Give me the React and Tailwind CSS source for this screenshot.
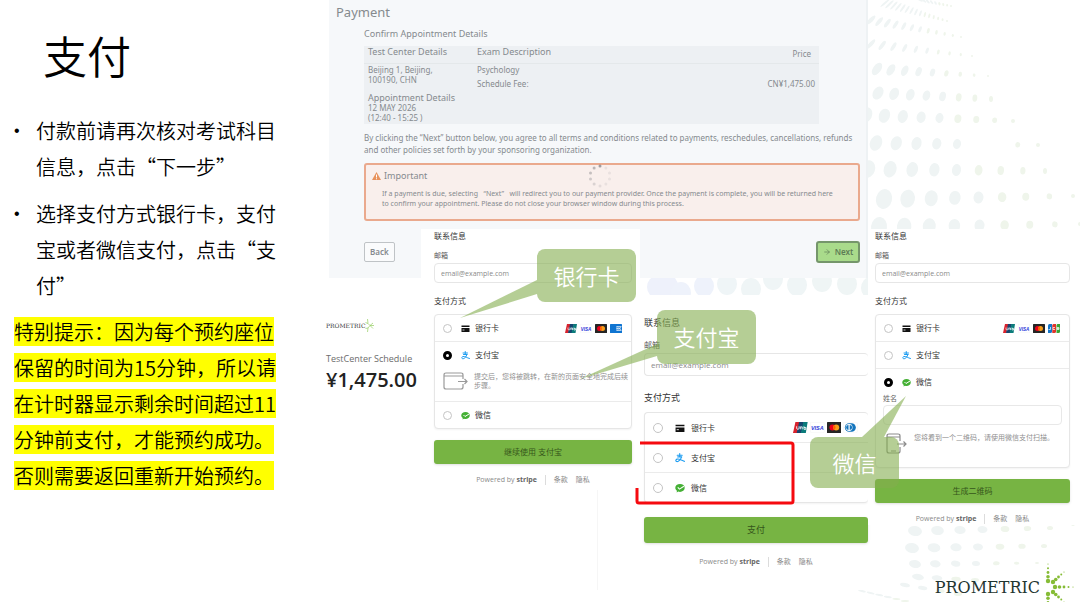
import { ArrowRight } from "lucide-react";
import { clsx } from "clsx";

// Background halftone: one entry per row, dots are spread evenly from start to end.
const DOT_ROWS = [
  { from: [920, 0], to: [951, 6], count: 9, r: [1, 3], rEnd: [1, 1], tilt: -60 },
  { from: [885, 3], to: [947, 21], count: 15, r: [1, 6], rEnd: [1, 1], tilt: 50 },
  { from: [871, 20], to: [961, 37], count: 12, r: [2, 6], rEnd: [1, 1], tilt: 45 },
  { from: [871, 44], to: [972, 56], count: 10, r: [2, 6], rEnd: [1, 1], tilt: 42 },
  { from: [877, 69], to: [988, 76], count: 9, r: [4, 7], rEnd: [1, 1], tilt: 36 },
  { from: [878, 93], to: [991, 99], count: 8, r: [5, 7], rEnd: [2, 3], tilt: 30 },
  { from: [866, 115], to: [1013, 121], count: 9, r: [6, 8], rEnd: [2, 2], tilt: 24 },
  { from: [876, 143], to: [1038, 145], count: 9, r: [6, 8], rEnd: [2, 2], tilt: 22, skip: [5, 6] },
  { from: [868, 169], to: [1045, 171], count: 9, r: [7, 9], rEnd: [2, 3], tilt: 18 },
  { from: [884, 199], to: [1073, 196], count: 9, r: [8, 10], rEnd: [2, 2], tilt: 14 },
  { from: [879, 227], to: [1080, 224], count: 9, r: [8, 10], rEnd: [2, 2], tilt: 8 },
  { from: [915, 531], to: [1050, 528], count: 7, r: [7, 5], rEnd: [3, 2], tilt: 8 },
  { from: [912, 548], to: [1044, 546], count: 7, r: [7, 5], rEnd: [3, 2], tilt: 8 },
  { from: [915, 564], to: [1037, 563], count: 7, r: [6, 4], rEnd: [2, 1], tilt: 10 },
  { from: [918, 577], to: [975, 580], count: 4, r: [6, 3], rEnd: [4, 2], tilt: 10 },
  { from: [905, 585], to: [958, 594], count: 4, r: [5, 2], rEnd: [4, 2], tilt: 12 },
  { from: [862, 591], to: [905, 601], count: 6, r: [4, 1], rEnd: [4, 1], tilt: 16 },
];

const STRIP_DOTS = [
  [657, 287, "#eef1fb"],
  [668, 286, "#eef1fb"],
  [681, 293, "#eef2fb"],
  [704, 286, "#eef2fb"],
  [727, 284, "#eff5f7"],
  [751, 289, "#eff5f6"],
  [773, 279, "#eff5f6"],
  [797, 285, "#eff5f6"],
  [822, 281, "#eff5f5"],
  [847, 284, "#eff5f5"],
  [871, 288, "#eff5f5"],
];

const lerp = (a, b, t) => a + (b - a) * t;

function Backdrop() {
  return (
    <svg className="absolute left-0 top-0" width="1080" height="602" aria-hidden="true">
      {DOT_ROWS.map((row, i) =>
        Array.from({ length: row.count }, (_, n) => {
          if (row.skip?.includes(n)) return null;
          const t = n / (row.count - 1);
          const x = lerp(row.from[0], row.to[0], t);
          const y = lerp(row.from[1], row.to[1], t);
          return (
            <ellipse
              key={`${i}-${n}`}
              cx={x}
              cy={y}
              rx={lerp(row.r[0], row.rEnd[0], t)}
              ry={lerp(row.r[1], row.rEnd[1], t)}
              transform={`rotate(${lerp(row.tilt, 0, t)} ${x} ${y})`}
              fill={t > 0.6 ? "#eff5eb" : "#eff4f4"}
            />
          );
        })
      )}
      {STRIP_DOTS.map(([x, y, fill]) => (
        <ellipse key={x} cx={x} cy={y} rx="10" ry="11" fill={fill} />
      ))}
      <ellipse cx="1079" cy="504" rx="3" ry="2" fill="#eef5ea" />
      <ellipse cx="1073" cy="524" rx="2" ry="2" fill="#eef5ea" />
    </svg>
  );
}

/* ---------- small drawings ---------- */

function UnionPay() {
  return (
    <svg viewBox="0 0 24 18" className="h-full w-auto">
      <path d="M4 0h7L7 18H0z" fill="#d8222d" />
      <path d="M10 0h8l-4 18H6z" fill="#16456f" />
      <path d="M17 0h7l-3 18h-8z" fill="#0b7c7b" />
      <path d="M6 7v3q0 2 2 2t2-2V7M12 12V8h3v4M18 7v5M18 9h3v3h-3" fill="none" stroke="#fff" strokeWidth="1.4" />
    </svg>
  );
}

function Visa() {
  return (
    <svg viewBox="0 0 24 18" className="h-full w-auto">
      <rect x="0.5" y="0.5" width="23" height="17" rx="2" fill="#fff" stroke="#f3f3f3" />
      <text x="12" y="13" textAnchor="middle" fontFamily="Liberation Sans, sans-serif" fontSize="9" fontWeight="700" fontStyle="italic" fill="#2a35d8">
        VISA
      </text>
    </svg>
  );
}

function Mastercard() {
  return (
    <svg viewBox="0 0 24 18" className="h-full w-auto">
      <rect width="24" height="18" rx="1" fill="#252525" />
      <circle cx="9" cy="9" r="5" fill="#eb001b" />
      <circle cx="15" cy="9" r="5" fill="#f79e1b" />
      <path d="M12 5a5 5 0 0 1 0 8a5 5 0 0 1 0-8" fill="#ff5f00" />
    </svg>
  );
}

function Amex() {
  return (
    <svg viewBox="0 0 24 18" className="h-full w-auto">
      <rect width="24" height="18" rx="1" fill="#0f74d1" />
      <path d="M13 5h10M13 9h6M13 13h10M14 5v8M17 6l5 6M22 6l-5 6" fill="none" stroke="#fff" strokeWidth="1.3" />
    </svg>
  );
}

function Diners() {
  return (
    <svg viewBox="0 0 24 18" className="h-full w-auto">
      <rect x="0.5" y="0.5" width="23" height="17" rx="2" fill="#fff" stroke="#f3f3f3" />
      <path d="M10 2h4a7 7 0 0 1 0 14h-4a7 7 0 0 1 0-14" fill="#1475bd" />
      <circle cx="10" cy="9" r="5.6" fill="#fff" />
      <path d="M9 5a4 4 0 0 0 0 8zM11 5a4 4 0 0 1 0 8z" fill="#1475bd" />
    </svg>
  );
}

function Jcb() {
  return (
    <svg viewBox="0 0 24 18" className="h-full w-auto">
      <path d="M3 0h5v15q0 3-3 3H0V3q0-3 3-3" fill="#1577c9" />
      <path d="M11 0h5v15q0 3-3 3H8.500V3q0-3 2.500-3" fill="#e0342b" />
      <path d="M19 0h5v15q0 3-3 3h-4V3q0-3 2-3" fill="#3aa435" />
      <path d="M1 11h4V6M14 7h-4v4h4M18 7h4v4h-4zM18 9h4" fill="none" stroke="#fff" strokeWidth="1.4" />
    </svg>
  );
}

const BRANDS = { unionpay: UnionPay, visa: Visa, mastercard: Mastercard, amex: Amex, diners: Diners, jcb: Jcb };

function CardGlyph({ className }) {
  return (
    <svg viewBox="0 0 18 18" className={className}>
      <path d="M1 3h16v3H1zM1 8h16v8H1z" fill="#111" />
      <path d="M3 12h4" stroke="#fff" strokeWidth="1.5" />
    </svg>
  );
}

function AlipayGlyph({ className }) {
  return (
    <svg viewBox="0 0 18 18" className={className} fill="none" stroke="#1e9df1" strokeWidth="2" strokeLinecap="round">
      <path d="M4 4h9M8.500 1v6M5 7h7M12 7q-2 6-6 8c-5 2-6-3-2-4c4-1 8 3 13 4" />
    </svg>
  );
}

function WechatGlyph({ className }) {
  return (
    <svg viewBox="0 0 18 18" className={className}>
      <path d="M9 2c5 0 8.500 3 8.500 7s-4 7-8.500 7c-1 0-2 0-3-.5L3 17l.5-3C2 13 .5 11 .5 9C.5 5 4 2 9 2" fill="#45b035" />
      <path d="M5 8l3 3l8-5" fill="none" stroke="#fff" strokeWidth="2" />
    </svg>
  );
}

function RedirectDrawing() {
  return (
    <svg viewBox="0 0 26 18" className="h-[18px] w-[26px] shrink-0" fill="none" stroke="#9a9a9a" strokeWidth="1.200">
      <path d="M20 7V3q0-2-2-2H3Q1 1 1 3v12q0 2 2 2h15q2 0 2-2v-3M1 4h19M15 9.500h9M21.500 7l2.500 2.500l-2.500 2.500" />
    </svg>
  );
}

function PhoneDrawing() {
  return (
    <svg viewBox="0 0 22 22" className="h-[22px] w-[22px] shrink-0" fill="none" stroke="#8b8b8b" strokeWidth="1.200">
      <path d="M14 8V3q0-2-2-2H3Q1 1 1 3v15q0 2 2 2h9q2 0 2-2v-4M1 4h13M5 18h5M11 11h9M17.500 8.500L20 11l-2.500 2.500" />
    </svg>
  );
}

/* ---------- checkout ---------- */

const METHODS = [
  { id: "card", label: "银行卡", Glyph: CardGlyph },
  { id: "alipay", label: "支付宝", Glyph: AlipayGlyph },
  { id: "wechat", label: "微信", Glyph: WechatGlyph },
];

function Method({ form, method, large, checked, brands, children }) {
  const { Glyph } = method;
  const id = `${form}-${method.id}`;
  return (
    <li>
      <div className={clsx("flex items-center pl-2", large ? "h-[29px] pr-[10px]" : "h-[26px] pr-[9px]")}>
        <input
          type="radio"
          id={id}
          name={`${form}-method`}
          defaultChecked={checked}
          className={clsx(
            "shrink-0 appearance-none rounded-full border border-[#c4c4c4] bg-white checked:border-[3px] checked:border-black",
            large ? "size-[10px]" : "size-[9px]"
          )}
        />
        <label htmlFor={id} className={clsx("flex items-center text-[8px] text-[#333]", large ? "ml-3 gap-[6px]" : "ml-[9px] gap-[5px]")}>
          <Glyph className={large ? "size-[10px]" : "size-[9px]"} />
          {method.label}
        </label>
        {brands && (
          <span className={clsx("ml-auto flex", large ? "h-[11px] gap-[2px]" : "h-[9px] gap-[3px]")}>
            {brands.map((name) => {
              const Brand = BRANDS[name];
              return <Brand key={name} />;
            })}
          </span>
        )}
      </div>
      {children}
    </li>
  );
}

function Checkout({ form, large, selected, brands, details, submit }) {
  const heading = clsx("leading-3 text-[#333]", large ? "text-[9px]" : "text-[8px]");
  return (
    <form onSubmit={(e) => e.preventDefault()}>
      <h3 className={heading}>联系信息</h3>
      <label
        htmlFor={`${form}-email`}
        className={clsx("block leading-[10px] text-[#555]", large ? "mt-[11px] text-[8px]" : "mt-[9px] text-[7px]")}
      >
        邮箱
      </label>
      <input
        type="email"
        id={`${form}-email`}
        placeholder="email@example.com"
        className={clsx(
          "block w-full rounded border border-[#e6e6e6] bg-white px-[6px] placeholder-[#8a8a8a]",
          large ? "mt-[3px] h-[23px] border-r-0 text-[8px]" : "mt-[2px] h-5 text-[7px]"
        )}
      />
      <h3 className={clsx(heading, large ? "mt-4" : "mt-3")}>支付方式</h3>
      <ul
        className={clsx(
          "divide-y divide-[#ebebeb] rounded border border-[#e6e6e6] bg-white shadow-xs",
          large ? "mt-2 border-r-0" : "mt-[7px]"
        )}
      >
        {METHODS.map((m) => (
          <Method
            key={m.id}
            form={form}
            method={m}
            large={large}
            checked={selected === m.id}
            brands={m.id === "card" ? brands : null}
          >
            {selected === m.id && details}
          </Method>
        ))}
      </ul>
      <button
        type="submit"
        className={clsx(
          "block w-full rounded-[3px] bg-[#77b443] text-[#36561b] shadow-sm",
          large ? "mt-[14px] h-[26px] text-[9px]" : "mt-[11px] h-6 text-[8px]"
        )}
      >
        {submit}
      </button>
      <p
        className={clsx(
          "flex items-center justify-center text-[7px] leading-3 text-[#8a8a8a]",
          large ? "mt-[13px]" : "mt-[10px]"
        )}
      >
        <span>
          Powered by <b className="text-[#666]">stripe</b>
        </span>
        <span className="mx-2 h-[10px] w-px bg-[#dcdcdc]" />
        <a href="#terms">条款</a>
        <a href="#privacy" className="ml-2">隐私</a>
      </p>
    </form>
  );
}

function Callout({ className, tail, children }) {
  return (
    <div className={clsx("absolute flex items-center justify-center rounded-lg bg-[#84ad4e]/60 pb-[2px] text-[22px] font-[350] leading-none text-white", className)}>
      <svg className="absolute left-0 top-0 size-px overflow-visible" aria-hidden="true">
        <path d={tail} fill="#84ad4e" fillOpacity="0.6" />
      </svg>
      {children}
    </div>
  );
}

/* ---------- appointment confirmation ---------- */

function Spinner() {
  return (
    <svg viewBox="0 0 26 26" className="absolute left-[221px] top-[-2px] size-[26px]" aria-hidden="true">
      {[0, 1, 2, 3, 4, 5, 6, 7, 8, 9].map((n) => {
        const a = (n / 10) * Math.PI * 2 - Math.PI / 2;
        return (
          <circle
            key={n}
            cx={13 + Math.cos(a) * 10}
            cy={13 + Math.sin(a) * 10}
            r="1.5"
            fill="#7b7b80"
            opacity={n === 0 ? 0.7 : Math.max(0.12, (n - 3) / 12)}
          />
        );
      })}
    </svg>
  );
}

function Confirmation() {
  return (
    <section className="absolute left-0 top-0 w-[539px] border-r-2 border-[#eef2f4] bg-[#f6f8fa] pb-[15px] pl-[7px] pt-1 font-['Noto_Sans','Noto_Sans_CJK_SC',sans-serif] text-[#858a8e]">
      <h2 className="text-[13px] leading-4">Payment</h2>
      <div className="ml-7 mr-[6px] mt-2 whitespace-nowrap text-[8px] leading-[10px]">
        <h3 className="text-[9px] leading-3">Confirm Appointment Details</h3>
        <table className="mt-[6px] w-[455px] bg-[#edf0f3] text-left">
          <thead>
            <tr className="h-[17px] border-b border-[#e4e8ea] text-[9px] *:font-normal">
              <th className="w-[113px] pb-1 pl-1">Test Center Details</th>
              <th className="pb-1">Exam Description</th>
              <th className="pr-2 text-right text-[8px]">Price</th>
            </tr>
          </thead>
          <tbody>
            <tr className="align-top">
              <td className="pb-px pl-1 pt-px">
                Beijing 1, Beijing,
                <br />
                100190, CHN
                <h4 className="mt-2 text-[9px]">Appointment Details</h4>
                12 MAY 2026
                <br />
                (12:40 - 15:25 )
              </td>
              <td className="pt-px">
                <p>Psychology</p>
                <p className="mt-1">Schedule Fee:</p>
              </td>
              <td className="pr-1 pt-[15px] text-right">CN¥1,475.00</td>
            </tr>
          </tbody>
        </table>
        <p className="mt-2 leading-3">
          By clicking the “Next” button below, you agree to all terms and conditions related to payments, reschedules, cancellations, refunds
          <br />
          and other policies set forth by your sponsoring organization.
        </p>
        <div className="relative mt-[7px] rounded-[3px] border-2 border-[#eaa98d] bg-[#f9efec] pb-[10px] pl-[6px] pt-[5px]">
          <Spinner />
          <h4 className="flex items-center gap-[3px] text-[9px] leading-3">
            <svg viewBox="0 0 18 16" className="h-2 w-[9px]">
              <path d="M9 0l9 16H0z" fill="#e8925c" />
              <path d="M9 5v6M9 12.500v2" stroke="#fff" strokeWidth="2" />
            </svg>
            Important
          </h4>
          <p className="ml-[10px] mt-[7px] text-[7px]">
            If a payment is due, selecting &nbsp; “Next” &nbsp; will redirect you to our payment provider. Once the payment is complete, you will be returned here
            <br />
            to confirm your appointment. Please do not close your browser window during this process.
          </p>
        </div>
        <div className="mt-5 flex items-center justify-between font-semibold">
          <button type="button" className="h-5 rounded-[2px] border border-[#bfc3c6] bg-[#fafbfc] px-[5px]">
            Back
          </button>
          <button
            type="button"
            className="flex h-[22px] w-11 items-center justify-center gap-1 rounded-[3px] border-2 border-[#75966b] bg-[#a9db8b] text-[#5e7c56]"
          >
            <ArrowRight className="size-2" />
            Next
          </button>
        </div>
      </div>
    </section>
  );
}

// Dotted five-ray mark beside the wordmark.
function BrandMark() {
  const rays = [
    [8, 13, 8, -4],
    [13, 14, 24, 4],
    [15, 19, 33, 19],
    [13, 24, 24, 34],
    [8, 26, 8, 43],
  ];
  return (
    <svg viewBox="0 0 40 40" className="size-10 overflow-visible" aria-hidden="true">
      {rays.map(([x1, y1, x2, y2], i) =>
        [0, 1, 2, 3, 4].map((n) => (
          <circle key={`${i}-${n}`} cx={lerp(x1, x2, n / 4)} cy={lerp(y1, y2, n / 4)} r={2.2 - n * 0.4} fill="#86bc36" />
        ))
      )}
    </svg>
  );
}

function Summary() {
  return (
    <section className="absolute left-[-3px] top-[318px] font-['Open_Sans','Noto_Sans_CJK_SC',sans-serif]">
      <div className="flex items-center font-['DejaVu_Serif',serif] text-[6px] text-[#333]">
        PROMETRIC
        <svg viewBox="0 0 18 30" className="h-[15px] w-[9px]" fill="none" stroke="#9bd06b" strokeWidth="1.500" aria-hidden="true">
          <path d="M5 2l1 9l4 4l6-5M10 15h8M10 15l-4 5l-1 8M10 15l6 6M1 9l5 2M1 21l5-1" />
        </svg>
      </div>
      <h3 className="mt-5 text-[9px] leading-3 text-[#6c6c6c]">TestCenter Schedule</h3>
      <p className="mt-[3px] text-[20px] font-semibold leading-6 text-[#222]">¥1,475.00</p>
    </section>
  );
}

export default function App() {
  return (
    <main className="relative flex min-h-screen overflow-hidden bg-white font-['Noto_Sans_CJK_SC',sans-serif] text-black" lang="zh-CN">
      <Backdrop />

      <div className="w-[329px] shrink-0 whitespace-nowrap pl-[14px] pt-[33px] text-[20px] font-[350] leading-9">
        <h1 className="ml-[29px] text-[44px] font-[350] leading-[44px]">支付</h1>
        <ul className="mt-9 space-y-[11px]">
          <li className="flex">
            <span className="w-[22px] font-['Liberation_Sans',sans-serif] text-[16px]">•</span>
            <p>
              付款前请再次核对考试科目
              <br />
              信息，点击“下一步”
            </p>
          </li>
          <li className="flex">
            <span className="w-[22px] font-['Liberation_Sans',sans-serif] text-[16px]">•</span>
            <p>
              选择支付方式银行卡，支付
              <br />
              宝或者微信支付，点击“支
              <br />
              付”
            </p>
          </li>
        </ul>
        <p className="mt-[10px]">
          <mark className="bg-[#ffff00] text-black">
            特别提示：因为每个预约座位
            <br />
            保留的时间为15分钟，所以请
            <br />
            在计时器显示剩余时间超过11
            <br />
            分钟前支付，才能预约成功。
            <br />
            否则需要返回重新开始预约。
          </mark>
        </p>
      </div>

      <div className="relative flex-1">
        <Confirmation />
        <Summary />

        {/* checkout steps sit over the confirmation page */}
        <section className="absolute left-[268px] top-[295px] w-[271px] border-l border-[#f6f6f6] bg-white pb-[22px] pl-[46px] pt-[22px] font-['Open_Sans','Noto_Sans_CJK_SC',sans-serif]">
          <Checkout form="pay" large brands={["unionpay", "visa", "mastercard", "diners"]} submit="支付" />
        </section>

        <section className="absolute left-[92px] top-[229px] w-[219px] bg-white pb-1 pl-[13px] pr-2 pt-px font-['Open_Sans','Noto_Sans_CJK_SC',sans-serif]">
          <Checkout
            form="alipay"
            selected="alipay"
            brands={["unionpay", "visa", "mastercard", "amex"]}
            submit="继续使用 支付宝"
            details={
              <div className="flex h-[33px] gap-[5px] pl-2 pt-1 text-[7px] leading-[9px] text-[#8f8f8f]">
                <RedirectDrawing />
                <p className="whitespace-nowrap">
                  提交后，您将被跳转，在新的页面安全地完成后续
                  <br />
                  步骤。
                </p>
              </div>
            }
          />
        </section>

        <section className="absolute left-[539px] top-[229px] w-[212px] bg-white pl-[7px] pr-[10px] pt-px font-['Open_Sans','Noto_Sans_CJK_SC',sans-serif]">
          <Checkout
            form="wechat"
            selected="wechat"
            brands={["unionpay", "visa", "mastercard", "jcb"]}
            submit="生成二维码"
            details={
              <div className="px-[7px] pb-3 text-[7px] text-[#8f8f8f]">
                <label htmlFor="wechat-name" className="block leading-2 text-[#666]">
                  姓名
                </label>
                <input type="text" id="wechat-name" className="mt-[2px] block h-5 w-full rounded border border-[#e8e8e8] bg-white px-1" />
                <div className="mt-2 flex gap-[6px] pl-[3px] leading-[9px]">
                  <PhoneDrawing />
                  <p className="whitespace-nowrap">您将看到一个二维码，请使用微信支付扫描。</p>
                </div>
              </div>
            }
          />
        </section>

        <svg className="absolute left-[306px] top-[440px]" width="162" height="68" fill="none" stroke="#f50a0f" strokeWidth="3" aria-hidden="true">
          <path d="M5 3h151q2 0 2 2v56q0 2-2 2H4q-2 0-2-2V48" />
        </svg>

        <Callout className="left-[208px] top-[249px] h-[53px] w-[99px]" tail="M0 31L-77 69L0 45z">
          银行卡
        </Callout>
        <Callout className="left-[328px] top-[310px] h-[54px] w-[99px]" tail="M0 34L-77 69L0 46z">
          支付宝
        </Callout>
        <Callout className="left-[481px] top-[437px] h-[51px] w-[89px]" tail="M52 0L96 -41L74 0z">
          微信
        </Callout>
      </div>

      <div className="absolute bottom-[-6px] right-0 flex items-center font-['DejaVu_Serif',serif] text-[16px] text-[#1f3530]">
        PROMETRIC
        <BrandMark />
      </div>
    </main>
  );
}
